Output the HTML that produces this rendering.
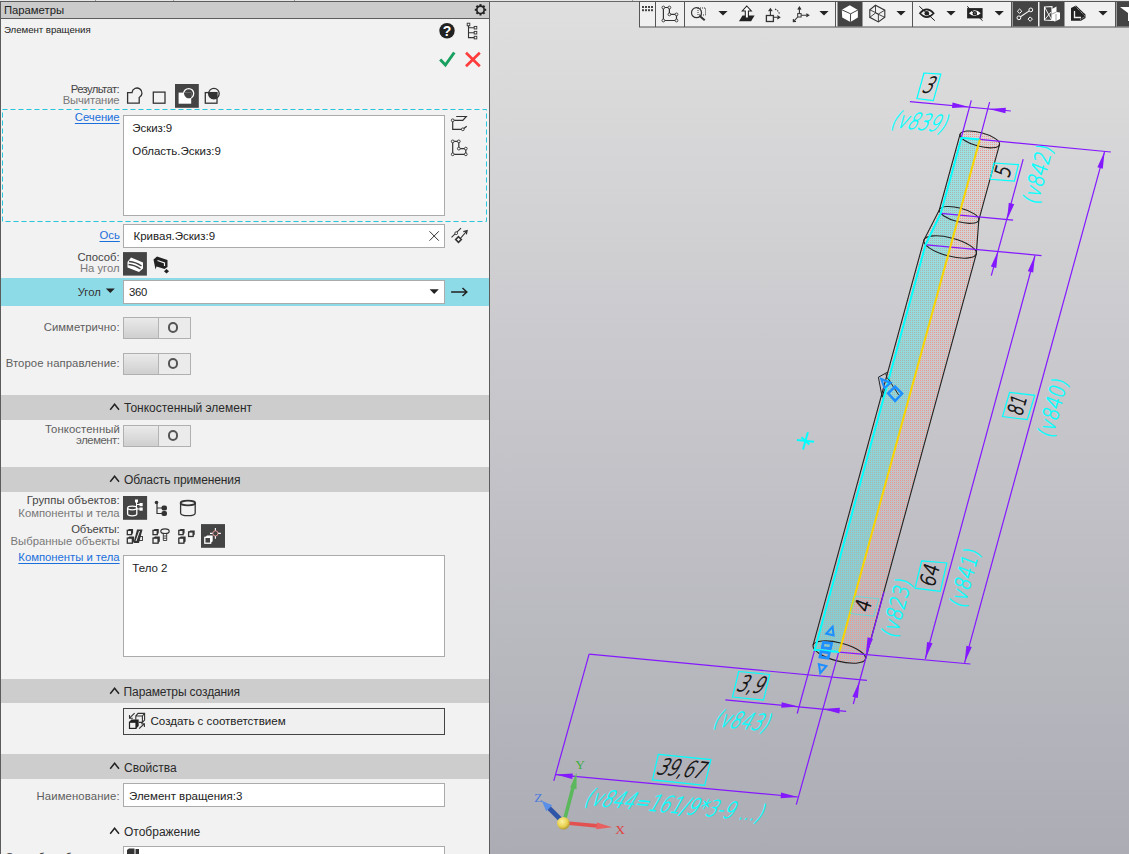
<!DOCTYPE html><html><head><meta charset="utf-8"><title>Параметры</title><style>
html,body{margin:0;padding:0}
body{width:1129px;height:854px;overflow:hidden;position:relative;background:#f2f2f2;font-family:"Liberation Sans",sans-serif}
.a{position:absolute}
.t{position:absolute;white-space:nowrap;line-height:1;}
.lnk{color:#1a6fdc !important;text-decoration:underline;text-underline-offset:2px}
.box{position:absolute;background:#fff;border:1px solid #ababab;box-sizing:border-box}
.sec{position:absolute;left:1px;width:488px;background:#cdcdcd}
.tog{position:absolute;left:123px;width:68px;height:22px;box-sizing:border-box;border:1px solid #b0b0b0;background:#ebebeb}
.tog i{position:absolute;left:0;top:0;width:33.5px;height:20px;background:linear-gradient(#eaeaea,#cfcfcf);border-right:1px solid #b4b4b4}
.tog b{position:absolute;left:43.7px;top:4px;width:6.6px;height:6.6px;border:2.1px solid #555;border-radius:50%}
svg{position:absolute;left:0;top:0}

</style></head><body>
<div class="a" style="left:0;top:0;width:1129px;height:2px;background:#e6e6e6"></div>
<div class="a" style="left:95px;top:0;width:1px;height:1px;background:#9a9a9a"></div>
<div class="a" style="left:173px;top:0;width:1px;height:1px;background:#9a9a9a"></div>
<div class="a" style="left:294px;top:0;width:1px;height:1px;background:#9a9a9a"></div>
<div class="a" style="left:632px;top:0;width:1px;height:1px;background:#9a9a9a"></div>
<div class="a" style="left:0;top:1px;width:490px;height:18px;background:#cbcbcb;border:1px solid #5c5c5c;box-sizing:border-box"></div>
<div class="a" style="left:0;top:18px;width:490px;height:58px;background:#f2f2f2;border:1px solid #5c5c5c;box-sizing:border-box"></div>
<div class="a" style="left:0;top:75px;width:490px;height:779px;background:#f2f2f2;border-left:1px solid #5c5c5c;border-right:1px solid #5c5c5c;box-sizing:border-box"></div>
<div class="a" style="left:1px;top:278px;width:488px;height:27.5px;background:#8edbe8"></div>
<div class="sec" style="top:395px;height:24.69999999999999px"></div>
<div class="sec" style="top:467.3px;height:24.5px"></div>
<div class="sec" style="top:678.8px;height:24.40000000000009px"></div>
<div class="sec" style="top:754px;height:24.5px"></div>
<svg width="1129" height="854" viewBox="0 0 1129 854"><rect x="2.5" y="109.5" width="484" height="112" fill="none" stroke="#27c3dc" stroke-width="1" stroke-dasharray="5 3"/></svg>
<div class="box" style="left:123px;top:115px;width:322px;height:101px"></div>
<div class="box" style="left:123px;top:224px;width:322px;height:24px"></div>
<div class="box" style="left:123px;top:280px;width:322px;height:23.5px"></div>
<div class="box" style="left:123px;top:555px;width:322px;height:102px"></div>
<div class="box" style="left:123px;top:708px;width:322px;height:27px;background:#f0f0f0;border-color:#444"></div>
<div class="box" style="left:123px;top:783px;width:322px;height:23.5px"></div>
<div class="box" style="left:123px;top:846px;width:322px;height:20px"></div>
<div class="tog" style="top:317px"><i></i><b></b></div>
<div class="tog" style="top:353px"><i></i><b></b></div>
<div class="tog" style="top:425px"><i></i><b></b></div>
<svg width="1129" height="854" viewBox="0 0 1129 854">
<defs>
<linearGradient id="bg" x1="0" y1="0" x2="0" y2="1"><stop offset="0" stop-color="#dfdfdf"/><stop offset="0.5" stop-color="#c5c5ca"/><stop offset="1" stop-color="#acacb5"/></linearGradient>
<pattern id="stP" width="2" height="2" patternUnits="userSpaceOnUse"><rect width="1" height="1" fill="#ea9a90"/></pattern>
</defs>
<rect x="490" y="0" width="639" height="854" fill="url(#bg)"/>
<path d="M981.6,132.7 A20.4,6.9 14.7 0 0 960.1,134.2 L939.4,209.7 L923.9,240.1 L813.1,645.2 L814.7,649.8 L839.3,652.1 Z" fill="url(#stP)"/>
<path d="M981.6,132.7 A20.4,6.9 14.7 0 1 999.5,144.6 L978.8,220.1 L976.3,253.9 L865.5,659.0 A27.1,9.1 14.7 0 1 836.9,660.9 L839.3,652.1 Z" fill="url(#stP)"/>
<polygon points="839.3,652.1 814.7,649.8 925.5,244.7 940.8,213.2 961.5,137.7 979.8,139.4" fill="rgba(0,255,255,0.27)"/>
<path d="M960.1,134.2 L939.4,209.7 L923.9,240.1 L813.1,645.2" fill="none" stroke="#222" stroke-width="1.1"/>
<path d="M999.5,144.6 L978.8,220.1 L976.3,253.9 L865.5,659.0" fill="none" stroke="#222" stroke-width="1.1"/>
<ellipse cx="979.8" cy="139.4" rx="20.4" ry="6.9" transform="rotate(14.7 979.8 139.4)" fill="none" stroke="#222" stroke-width="1.1"/>
<ellipse cx="959.1" cy="214.9" rx="20.4" ry="6.9" transform="rotate(14.7 959.1 214.9)" fill="none" stroke="#222" stroke-width="1.1"/>
<ellipse cx="950.1" cy="247.0" rx="27.1" ry="9.1" transform="rotate(14.7 950.1 247.0)" fill="none" stroke="#222" stroke-width="1.1"/>
<ellipse cx="839.3" cy="652.1" rx="27.1" ry="9.1" transform="rotate(14.7 839.3 652.1)" fill="none" stroke="#222" stroke-width="1.1"/>
<line x1="909.9" y1="101.6" x2="1010.8" y2="111.0" stroke="#8418ff" stroke-width="1.2" />
<polygon points="969.2,106.9 952.0,108.1 952.5,102.5" fill="#8418ff"/>
<polygon points="988.7,108.9 1005.9,107.7 1005.4,113.3" fill="#8418ff"/>
<line x1="971.3" y1="100.4" x2="961.4" y2="137.0" stroke="#8418ff" stroke-width="1.2" />
<line x1="989.6" y1="102.2" x2="979.6" y2="139.7" stroke="#8418ff" stroke-width="1.2" />
<line x1="979.8" y1="139.4" x2="1110.9" y2="152.0" stroke="#8418ff" stroke-width="1.2" />
<line x1="1023.2" y1="159.2" x2="991.3" y2="275.7" stroke="#8418ff" stroke-width="1.2" />
<polygon points="1007.0,219.9 1008.8,202.8 1014.2,204.2" fill="#8418ff"/>
<polygon points="998.1,250.9 996.3,268.0 990.9,266.6" fill="#8418ff"/>
<line x1="940.9" y1="213.4" x2="1013.1" y2="220.2" stroke="#8418ff" stroke-width="1.2" />
<line x1="926.5" y1="244.9" x2="1041.5" y2="255.6" stroke="#8418ff" stroke-width="1.2" />
<line x1="1035.0" y1="255.5" x2="925.3" y2="659.0" stroke="#8418ff" stroke-width="1.2" />
<polygon points="1035.0,255.5 1033.2,272.6 1027.8,271.2" fill="#8418ff"/>
<polygon points="925.3,659.0 927.1,641.9 932.5,643.3" fill="#8418ff"/>
<line x1="1104.6" y1="151.6" x2="964.6" y2="662.8" stroke="#8418ff" stroke-width="1.2" />
<polygon points="1104.6,151.6 1102.8,168.7 1097.4,167.3" fill="#8418ff"/>
<polygon points="964.6,662.8 966.4,645.7 971.8,647.1" fill="#8418ff"/>
<line x1="839.3" y1="652.1" x2="970.4" y2="664.0" stroke="#8418ff" stroke-width="1.2" />
<line x1="884.0" y1="592.0" x2="853.3" y2="704.0" stroke="#8418ff" stroke-width="1.2" />
<polygon points="865.8,654.4 867.6,637.3 873.0,638.7" fill="#8418ff"/>
<polygon points="859.6,681.0 857.8,698.1 852.4,696.7" fill="#8418ff"/>
<line x1="589.1" y1="654.2" x2="866.9" y2="680.4" stroke="#8418ff" stroke-width="1.2" />
<line x1="589.1" y1="654.2" x2="553.8" y2="780.8" stroke="#8418ff" stroke-width="1.2" />
<line x1="555.6" y1="774.6" x2="797.8" y2="797.0" stroke="#8418ff" stroke-width="1.2" />
<polygon points="555.6,774.6 572.8,773.4 572.3,779.0" fill="#8418ff"/>
<polygon points="797.8,797.0 780.6,798.2 781.1,792.6" fill="#8418ff"/>
<line x1="838.7" y1="652.1" x2="796.3" y2="804.7" stroke="#8418ff" stroke-width="1.2" />
<line x1="814.7" y1="649.8" x2="797.2" y2="713.5" stroke="#8418ff" stroke-width="1.2" />
<line x1="725.4" y1="699.9" x2="846.2" y2="711.4" stroke="#8418ff" stroke-width="1.2" />
<polygon points="798.4,706.6 781.2,707.8 781.7,702.2" fill="#8418ff"/>
<polygon points="822.7,709.0 839.9,707.8 839.4,713.4" fill="#8418ff"/>
<polyline points="839.3,652.1 814.7,649.8 925.5,244.7 940.8,213.2 961.5,137.7 979.8,139.4" fill="none" stroke="#00ffff" stroke-width="2"/>
<line x1="839.3" y1="652.1" x2="979.8" y2="139.4" stroke="#f7d400" stroke-width="2.0" />
<polygon points="924.0,73.0 940.8,74.1 933.3,100.6 916.9,98.5" fill="none" stroke="#00ffff" stroke-width="1.2"/>
<polygon points="993.9,163.0 1018.5,164.6 1014.4,181.0 990.2,179.3" fill="none" stroke="#00ffff" stroke-width="1.2"/>
<polygon points="1009.6,392.3 1034.8,395.3 1027.3,419.7 1002.5,416.5" fill="none" stroke="#00ffff" stroke-width="1.2"/>
<polygon points="921.7,560.9 946.9,563.0 940.3,591.4 915.0,588.2" fill="none" stroke="#00ffff" stroke-width="1.2"/>
<polygon points="855.3,596.3 878.8,598.8 873.9,616.2 850.5,613.5" fill="none" stroke="#00ffff" stroke-width="1.0" stroke-opacity="0.45"/>
<polygon points="738.7,671.5 769.7,674.5 763.5,700.2 732.5,697.0" fill="none" stroke="#00ffff" stroke-width="1.2"/>
<polygon points="658.3,754.3 710.9,759.6 704.7,785.3 652.5,779.9" fill="none" stroke="#00ffff" stroke-width="1.2"/>
<text transform="matrix(0.9957,0.0926,-0.5307,0.9397,928.8,86.5)" x="0.5" y="6.6" text-anchor="middle" textLength="9.8" lengthAdjust="spacingAndGlyphs" font-family="'DejaVu Sans', sans-serif" font-weight="200" font-size="23.05" fill="#111" stroke="#111" stroke-width="0.7">3</text>
<text transform="matrix(0.9957,0.0926,-0.5307,0.9397,751.1,685.8)" x="0.5" y="6.6" text-anchor="middle" textLength="26.0" lengthAdjust="spacingAndGlyphs" font-family="'DejaVu Sans', sans-serif" font-weight="200" font-size="23.05" fill="#111" stroke="#111" stroke-width="0.7">3,9</text>
<text transform="matrix(0.9957,0.0926,-0.5307,0.9397,681.6,769.8)" x="0.5" y="6.6" text-anchor="middle" textLength="47.0" lengthAdjust="spacingAndGlyphs" font-family="'DejaVu Sans', sans-serif" font-weight="200" font-size="23.05" fill="#111" stroke="#111" stroke-width="0.7">39,67</text>
<text transform="matrix(0.2639,-0.9645,0.9250,0.3511,1004.2,172.0)" x="0.5" y="6.0" text-anchor="middle" textLength="11.2" lengthAdjust="spacingAndGlyphs" font-family="'DejaVu Sans', sans-serif" font-weight="200" font-size="21.40" fill="#111" stroke="#111" stroke-width="0.7">5</text>
<text transform="matrix(0.2639,-0.9645,0.9250,0.3511,1018.5,405.9)" x="0.5" y="6.0" text-anchor="middle" textLength="19.5" lengthAdjust="spacingAndGlyphs" font-family="'DejaVu Sans', sans-serif" font-weight="200" font-size="21.40" fill="#111" stroke="#111" stroke-width="0.7">81</text>
<text transform="matrix(0.2639,-0.9645,0.9250,0.3511,931.0,575.9)" x="0.5" y="6.0" text-anchor="middle" textLength="22.4" lengthAdjust="spacingAndGlyphs" font-family="'DejaVu Sans', sans-serif" font-weight="200" font-size="21.40" fill="#111" stroke="#111" stroke-width="0.7">64</text>
<text transform="matrix(0.2639,-0.9645,0.9250,0.3511,864.6,606.2)" x="0.5" y="6.0" text-anchor="middle" textLength="11.6" lengthAdjust="spacingAndGlyphs" font-family="'DejaVu Sans', sans-serif" font-weight="200" font-size="21.40" fill="#111" stroke="#111" stroke-width="0.7">4</text>
<text transform="matrix(0.9957,0.0926,-0.5307,0.9397,920.5,122.0)" x="0.0" y="7.9" text-anchor="middle" textLength="54.5" lengthAdjust="spacingAndGlyphs" font-family="'DejaVu Sans', sans-serif" font-weight="200" font-size="23.59" fill="#00ffff" stroke="#00ffff" stroke-width="0.5">(v839)</text>
<text transform="matrix(0.9957,0.0926,-0.5307,0.9397,743.2,721.0)" x="0.0" y="7.9" text-anchor="middle" textLength="54.5" lengthAdjust="spacingAndGlyphs" font-family="'DejaVu Sans', sans-serif" font-weight="200" font-size="23.59" fill="#00ffff" stroke="#00ffff" stroke-width="0.5">(v843)</text>
<text transform="matrix(0.9957,0.0926,-0.5307,0.9397,675.8,805.4)" x="0.0" y="7.9" text-anchor="middle" textLength="178.0" lengthAdjust="spacingAndGlyphs" font-family="'DejaVu Sans', sans-serif" font-weight="200" font-size="23.59" fill="#00ffff" stroke="#00ffff" stroke-width="0.5">(v844=161/9*3-9 ...)</text>
<text transform="matrix(0.2639,-0.9645,0.9250,0.3511,1038.2,174.2)" x="0.0" y="7.4" text-anchor="middle" textLength="60.0" lengthAdjust="spacingAndGlyphs" font-family="'DejaVu Sans', sans-serif" font-weight="200" font-size="22.22" fill="#00ffff" stroke="#00ffff" stroke-width="0.5">(v842)</text>
<text transform="matrix(0.2639,-0.9645,0.9250,0.3511,1053.0,407.8)" x="0.0" y="7.4" text-anchor="middle" textLength="60.0" lengthAdjust="spacingAndGlyphs" font-family="'DejaVu Sans', sans-serif" font-weight="200" font-size="22.22" fill="#00ffff" stroke="#00ffff" stroke-width="0.5">(v840)</text>
<text transform="matrix(0.2639,-0.9645,0.9250,0.3511,896.9,607.8)" x="0.0" y="7.4" text-anchor="middle" textLength="60.0" lengthAdjust="spacingAndGlyphs" font-family="'DejaVu Sans', sans-serif" font-weight="200" font-size="22.22" fill="#00ffff" stroke="#00ffff" stroke-width="0.5">(v823)</text>
<text transform="matrix(0.2639,-0.9645,0.9250,0.3511,965.0,577.6)" x="0.0" y="7.4" text-anchor="middle" textLength="60.0" lengthAdjust="spacingAndGlyphs" font-family="'DejaVu Sans', sans-serif" font-weight="200" font-size="22.22" fill="#00ffff" stroke="#00ffff" stroke-width="0.5">(v841)</text>
<g stroke="#00ffff" stroke-width="2" stroke-linecap="butt"><line x1="796.9" y1="440.1" x2="814" y2="441.8"/><line x1="807.9" y1="432.2" x2="803" y2="449.5"/><line x1="801.4" y1="437.3" x2="809.4" y2="444.4"/></g>
<path d="M887.7,372.1 L878.4,377.2 L882.2,397.2 L884.6,388.5 M885.8,373.5 L887.3,379 M888.3,378.8 L898.6,394.9" fill="none" stroke="#222" stroke-width="1"/>
<path d="M881.3,379 L890.6,382.9 L884.4,388 Z" fill="none" stroke="#1e8fff" stroke-width="2.2" stroke-linejoin="miter"/>
<path d="M895.1,386.6 L902.1,393.6 L895.1,400.9 L888.1,393.4 Z" fill="none" stroke="#1e8fff" stroke-width="2.5"/>
<path d="M832.6,626.8 L826.3,633.6 L833.6,635.3 Z" fill="none" stroke="#1e8fff" stroke-width="2.1"/>
<polygon points="823.4,642.4 831.6,643.5 830.4,648.7 822.2,647.6" fill="none" stroke="#1e8fff" stroke-width="2.7"/>
<polygon points="820.9,651.7 829.3,652.8 828.2,658.2 819.9,657.1" fill="none" stroke="#1e8fff" stroke-width="2.7"/>
<path d="M818.9,664.2 L826.3,666.1 L820.3,673 Z" fill="none" stroke="#1e8fff" stroke-width="2.1"/>
<g>
<line x1="562.5" y1="821.5" x2="547" y2="806" stroke="#2f55a8" stroke-width="4.6"/>
<polygon points="541.8,800.8 552.2,805.2 546.3,811.2" fill="#5a8fe8"/>
<line x1="565" y1="818" x2="573" y2="787.5" stroke="#5cb85c" stroke-width="3.6"/>
<polygon points="576.5,772.8 576.6,789.3 570.2,787.6" fill="#5cb85c"/>
<line x1="569" y1="823.3" x2="597.5" y2="825.9" stroke="#e25050" stroke-width="3.6"/>
<polygon points="612.3,827.3 596.2,829.3 596.9,822.6" fill="#e86060"/>
<radialGradient id="sph" cx="0.4" cy="0.35" r="0.7"><stop offset="0" stop-color="#fbf3a0"/><stop offset="0.6" stop-color="#e8d050"/><stop offset="1" stop-color="#a89030"/></radialGradient>
<circle cx="563.4" cy="823.3" r="6.3" fill="url(#sph)"/>
<text x="575.3" y="769.3" font-family="'Liberation Serif', serif" font-size="13.5" fill="#3fae3f">Y</text>
<text x="615.3" y="833.6" font-family="'Liberation Serif', serif" font-size="13.5" fill="#e04040">X</text>
<text x="534.3" y="802.3" font-family="'Liberation Serif', serif" font-size="13.5" fill="#4a7ae0">Z</text>
</g>
<rect x="490" y="0" width="639" height="1" fill="#e6e6e6"/><rect x="490" y="1" width="639" height="1" fill="#686868"/><rect x="632" y="0" width="1" height="1" fill="#9a9a9a"/>
<rect x="639.5" y="1.5" width="490" height="25.5" fill="#f0f0f0" stroke="#555" stroke-width="1"/>
<line x1="655.5" y1="2" x2="655.5" y2="27" stroke="#555" stroke-width="1"/>
<line x1="684.5" y1="2" x2="684.5" y2="27" stroke="#555" stroke-width="1"/>
<line x1="835.5" y1="2" x2="835.5" y2="27" stroke="#555" stroke-width="1"/>
<line x1="912.5" y1="2" x2="912.5" y2="27" stroke="#555" stroke-width="1"/>
<line x1="1011.5" y1="2" x2="1011.5" y2="27" stroke="#555" stroke-width="1"/>
<line x1="1115.5" y1="2" x2="1115.5" y2="27" stroke="#555" stroke-width="1"/>
<rect x="837.5" y="2" width="25" height="24.5" fill="#444"/>
<rect x="1012.5" y="2" width="25.5" height="24.5" fill="#444"/>
<rect x="1039.5" y="2" width="25" height="24.5" fill="#444"/>
<rect x="1116.5" y="2" width="13" height="24.5" fill="#444"/>
<rect x="642" y="6.0" width="2" height="2" fill="#444"/>
<rect x="645" y="6.0" width="2" height="2" fill="#444"/>
<rect x="648" y="6.0" width="2" height="2" fill="#444"/>
<rect x="651" y="6.0" width="2" height="2" fill="#444"/>
<rect x="642" y="9.2" width="2" height="2" fill="#444"/>
<rect x="645" y="9.2" width="2" height="2" fill="#444"/>
<rect x="648" y="9.2" width="2" height="2" fill="#444"/>
<rect x="651" y="9.2" width="2" height="2" fill="#444"/>
<polygon points="663.4,7.5 669.4,7.5 669.4,14.4 676.5,14.4 676.5,20.5 663.4,20.5" fill="none" stroke="#333" stroke-width="1.2"/><circle cx="663.4" cy="7.5" r="1.4" fill="#f0f0f0" stroke="#333" stroke-width="0.9"/><circle cx="669.4" cy="7.5" r="1.4" fill="#f0f0f0" stroke="#333" stroke-width="0.9"/><circle cx="669.4" cy="14.4" r="1.4" fill="#f0f0f0" stroke="#333" stroke-width="0.9"/><circle cx="676.5" cy="14.4" r="1.4" fill="#f0f0f0" stroke="#333" stroke-width="0.9"/><circle cx="676.5" cy="20.5" r="1.4" fill="#f0f0f0" stroke="#333" stroke-width="0.9"/><circle cx="663.4" cy="20.5" r="1.4" fill="#f0f0f0" stroke="#333" stroke-width="0.9"/>
<circle cx="696.5" cy="12.7" r="5" fill="none" stroke="#333" stroke-width="1.2"/>
<line x1="700" y1="16.3" x2="704.7" y2="20.3" stroke="#333" stroke-width="2"/>
<rect x="698" y="8" width="7.5" height="7" fill="none" stroke="#333" stroke-width="1" stroke-dasharray="1 1"/>
<polygon points="718.4,11.0 727.6,11.0 723,15.6" fill="#222"/>
<polygon points="739,21.3 742.5,15.5 754.6,15.5 751.1,21.3" fill="#222"/>
<polygon points="746.8,6 751.3,11 748.4,11 748.4,18 745.3,18 745.3,11 742.3,11" fill="#fff" stroke="#222" stroke-width="1.1"/>
<rect x="766.4" y="15.5" width="7" height="6" fill="#f0f0f0" stroke="#333" stroke-width="1.3"/>
<path d="M770.4,15.5 V9.5 M768.6,11.3 L770.4,8.8 L772.2,11.3 M773.4,17.3 H779 M777.3,15.6 L779.8,17.3 L777.3,19" fill="none" stroke="#333" stroke-width="1.1"/>
<path d="M775,9 Q779,11 779.5,14.5" fill="none" stroke="#333" stroke-width="1.1" stroke-dasharray="1.5 1"/>
<rect x="797.7" y="13.6" width="3.4" height="3.4" fill="#f0f0f0" stroke="#333" stroke-width="1"/>
<path d="M799.4,13.6 V8 M797.8,9.6 L799.4,7 L801,9.6 M801.1,15.3 H808 M806.3,13.7 L808.8,15.3 L806.3,16.9 M797.7,17 L793.6,21.4 M793.4,18.9 L793.3,21.7 L796,21.4" fill="none" stroke="#333" stroke-width="1.1"/>
<polygon points="819.4,11.0 828.6,11.0 824,15.6" fill="#222"/>
<polygon points="849.8,5.2 857.9,10 857.9,17.4 850.4,21.9 842.2,17.4 841.8,9.8" fill="#fff"/>
<path d="M841.8,9.8 L850.6,13.8 L857.9,10 M850.6,13.8 L850.4,21.9" fill="none" stroke="#444" stroke-width="1"/>
<polygon points="875.5,5.2 884.8,10.2 884.8,17.3 878.4,21.9 869.8,17.3 869.8,9.8" fill="none" stroke="#333" stroke-width="1.1"/>
<path d="M869.8,9.8 L878.4,14 L884.8,10.2 M878.4,14 V21.9 M875.5,5.2 V13 L869.8,17.3 M875.5,13 L884.8,17.3" fill="none" stroke="#333" stroke-width="0.9"/>
<polygon points="896.4,11.0 905.6,11.0 901,15.6" fill="#222"/>
<path d="M919.9,13.2 Q926.8,5.5 933.7,13.2 Q926.8,21 919.9,13.2 Z" fill="none" stroke="#222" stroke-width="1.6"/>
<circle cx="926.8" cy="13.2" r="2.3" fill="#222"/>
<line x1="919.3" y1="6.3" x2="934.8" y2="20.7" stroke="#222" stroke-width="1"/>
<polygon points="946.4,11.0 955.6,11.0 951,15.6" fill="#222"/>
<rect x="967.1" y="8.1" width="15.5" height="10.3" fill="#222"/>
<path d="M969,13.2 Q974.8,7.5 980.7,13.2 Q974.8,19 969,13.2 Z" fill="#fff"/>
<circle cx="974.8" cy="13.2" r="2.2" fill="#222"/><circle cx="974.8" cy="13.2" r="0.8" fill="#fff"/>
<line x1="967.1" y1="6.3" x2="982.6" y2="20.7" stroke="#222" stroke-width="1"/>
<polygon points="994.6,11.0 1003.8000000000001,11.0 999.2,15.6" fill="#222"/>
<line x1="1018.9" y1="17.8" x2="1030.8" y2="9.9" stroke="#fff" stroke-width="1.1"/>
<circle cx="1018.9" cy="17.8" r="1.9" fill="#444" stroke="#fff" stroke-width="1"/><circle cx="1030.8" cy="9.9" r="1.9" fill="#444" stroke="#fff" stroke-width="1"/>
<polygon points="1019.6,9 1021.8,11.2 1019.6,13.4 1017.4,11.2" fill="#444" stroke="#fff" stroke-width="1"/>
<polygon points="1030.2,16.9 1032.4,19.1 1030.2,21.3 1028,19.1" fill="#444" stroke="#fff" stroke-width="1"/>
<polygon points="1044.5,7 1052,6.5 1052,20.5 1044.5,20" fill="none" stroke="#fff" stroke-width="1.1"/>
<path d="M1044.5,7 L1052,20.5 M1044.5,20 L1051,12" stroke="#fff" stroke-width="0.9" fill="none"/>
<polygon points="1052,9 1056.5,6.5 1056.5,12 1060,12.5 1060,19 1055,21.5 1052,20.5" fill="#fff"/>
<path d="M1052,14 L1056.5,12 M1056,14 V21" stroke="#888" stroke-width="0.8" fill="none"/>
<path d="M1071,8 L1076,5.5 L1085.5,14.5 V18 L1081,20.8 H1071 Z" fill="#222"/>
<path d="M1074.5,11 V17.5 H1081" fill="none" stroke="#f0f0f0" stroke-width="1.3"/>
<path d="M1075.5,6.5 L1084.5,15.5 M1078,6.5 L1085,13.5 M1080,19.5 L1084.5,17" fill="none" stroke="#f0f0f0" stroke-width="0.8" stroke-dasharray="1 1"/>
<polygon points="1098.4,11.0 1107.6,11.0 1103,15.6" fill="#222"/>
<path d="M1120,7 H1131 V21 H1128 V13 Z" fill="#fff"/>
<line x1="484.10" y1="9.80" x2="486.20" y2="9.80" stroke="#222" stroke-width="2"/><line x1="483.05" y1="12.35" x2="484.53" y2="13.83" stroke="#222" stroke-width="2"/><line x1="480.50" y1="13.40" x2="480.50" y2="15.50" stroke="#222" stroke-width="2"/><line x1="477.95" y1="12.35" x2="476.47" y2="13.83" stroke="#222" stroke-width="2"/><line x1="476.90" y1="9.80" x2="474.80" y2="9.80" stroke="#222" stroke-width="2"/><line x1="477.95" y1="7.25" x2="476.47" y2="5.77" stroke="#222" stroke-width="2"/><line x1="480.50" y1="6.20" x2="480.50" y2="4.10" stroke="#222" stroke-width="2"/><line x1="483.05" y1="7.25" x2="484.53" y2="5.77" stroke="#222" stroke-width="2"/><circle cx="480.5" cy="9.8" r="3.7" fill="none" stroke="#222" stroke-width="1.7"/>
<circle cx="447" cy="30.7" r="7.7" fill="#222"/>
<text x="447" y="35.7" text-anchor="middle" font-family="'Liberation Sans', sans-serif" font-weight="bold" font-size="14" fill="#fff">?</text>
<path d="M468.5,25 V37.6 H474.5 M468.5,27.7 H474.5 M468.5,32.7 H474.5" fill="none" stroke="#333" stroke-width="1.1"/>
<rect x="467.2" y="23.2" width="2.6" height="2.6" fill="#f2f2f2" stroke="#333" stroke-width="0.9"/>
<rect x="474.2" y="26.4" width="2.6" height="2.6" fill="#f2f2f2" stroke="#333" stroke-width="0.9"/>
<rect x="474.2" y="31.400000000000002" width="2.6" height="2.6" fill="#f2f2f2" stroke="#333" stroke-width="0.9"/>
<rect x="474.2" y="36.300000000000004" width="2.6" height="2.6" fill="#f2f2f2" stroke="#333" stroke-width="0.9"/>
<path d="M440.2,59.5 L445.4,65 L454.3,52.5" fill="none" stroke="#18a060" stroke-width="3"/>
<path d="M466,52.8 L479.8,66.2 M479.8,52.8 L466,66.2" fill="none" stroke="#ff3c3c" stroke-width="2.7"/>
<path d="M127.6,103.2 V92.6 H132 A5,5 0 1 1 139.2,97.5 V103.2 Z" fill="none" stroke="#333" stroke-width="1.3"/>
<rect x="153.3" y="92.1" width="11.7" height="11.1" fill="none" stroke="#333" stroke-width="1.3"/>
<rect x="175" y="84" width="23.8" height="23.8" fill="#444"/>
<rect x="178.6" y="92.6" width="12.6" height="11.1" fill="#fff"/>
<circle cx="188.7" cy="93.6" r="5" fill="none" stroke="#fff" stroke-width="1.3"/>
<path d="M184,92.6 H191.2 V97.8 A5,5 0 0 1 184,93.6 Z" fill="#444"/>
<rect x="205.3" y="92.6" width="11.7" height="10.6" fill="none" stroke="#333" stroke-width="1.3"/>
<circle cx="213.9" cy="93.6" r="5.3" fill="none" stroke="#333" stroke-width="1.3"/>
<path d="M208.6,92.6 H217 V98 A5.3,5.3 0 0 1 208.6,93.6 Z" fill="#333"/>
<path d="M456.2,116.5 H466.3 L462.8,120.3 H452.7 V129.3 H462.8 L466.7,126.2" fill="none" stroke="#333" stroke-width="1.2"/>
<circle cx="452.7" cy="120.3" r="1.4" fill="#f2f2f2" stroke="#333" stroke-width="0.9"/><circle cx="462.8" cy="129.3" r="1.4" fill="#f2f2f2" stroke="#333" stroke-width="0.9"/>
<polygon points="452.7,141.4 458.8,141.4 458.8,148.6 465.8,148.6 465.8,154.3 452.7,154.3" fill="none" stroke="#333" stroke-width="1.2"/><circle cx="452.7" cy="141.4" r="1.4" fill="#f2f2f2" stroke="#333" stroke-width="0.9"/><circle cx="458.8" cy="141.4" r="1.4" fill="#f2f2f2" stroke="#333" stroke-width="0.9"/><circle cx="458.8" cy="148.6" r="1.4" fill="#f2f2f2" stroke="#333" stroke-width="0.9"/><circle cx="465.8" cy="148.6" r="1.4" fill="#f2f2f2" stroke="#333" stroke-width="0.9"/><circle cx="465.8" cy="154.3" r="1.4" fill="#f2f2f2" stroke="#333" stroke-width="0.9"/><circle cx="452.7" cy="154.3" r="1.4" fill="#f2f2f2" stroke="#333" stroke-width="0.9"/>
<path d="M429.5,231.3 L438.8,240.7 M438.8,231.3 L429.5,240.7" stroke="#333" stroke-width="1" fill="none"/>
<path d="M451.5,237.4 L461,228.2 M459,240 L466.5,231.3 M463.3,231.6 L467.2,230.5 L466.4,234.4" fill="none" stroke="#333" stroke-width="1.1"/>
<circle cx="456.2" cy="233.2" r="1.4" fill="#f2f2f2" stroke="#333" stroke-width="0.9"/>
<polygon points="458.5,236.7 461.3,239.5 458.5,242.3 455.7,239.5" fill="#f2f2f2" stroke="#333" stroke-width="1.6"/>
<rect x="123" y="252.1" width="23.9" height="23.5" fill="#444"/>
<path d="M127.5,262 L131,257.5 L143,262.5 V268.5 L139,272 L127.5,267.5 Z" fill="#fff"/>
<path d="M129,261.5 Q136,262 141.5,266 M128.5,264.5 Q135,265 140.5,269" fill="none" stroke="#444" stroke-width="1.4"/>
<path d="M153.5,259.5 L157,256.5 L167.5,260 V267 L164.5,269 L156.5,266.5 L155.5,269.5 Z" fill="#222"/>
<path d="M157.5,260.5 L164.5,263 V266" fill="none" stroke="#f2f2f2" stroke-width="1.2"/>
<polygon points="166.5,269 169,271.2 166.5,273.4 164,271.2" fill="#222"/>
<polygon points="105.8,288.4 114.8,288.4 110.3,292.9" fill="#222"/>
<polygon points="429.6,289.3 438.8,289.3 434.2,293.9" fill="#222"/>
<path d="M451.1,292 H466.5 M462.5,288 L466.8,292 L462.5,296" fill="none" stroke="#222" stroke-width="1.5"/>
<path d="M110.19999999999999,409.7 L114.6,404.3 L119.0,409.7" fill="none" stroke="#222" stroke-width="1.5"/>
<path d="M110.19999999999999,481.7 L114.6,476.3 L119.0,481.7" fill="none" stroke="#222" stroke-width="1.5"/>
<path d="M110.19999999999999,693.7 L114.6,688.3 L119.0,693.7" fill="none" stroke="#222" stroke-width="1.5"/>
<path d="M110.19999999999999,768.7 L114.6,763.3 L119.0,768.7" fill="none" stroke="#222" stroke-width="1.5"/>
<path d="M110.19999999999999,833.7 L114.6,828.3 L119.0,833.7" fill="none" stroke="#222" stroke-width="1.5"/>
<rect x="123" y="496" width="24.1" height="23.8" fill="#444"/>
<path d="M127.6,508 V514 A4.6,1.8 0 0 0 136.8,514 V508" fill="none" stroke="#fff" stroke-width="1.3"/><ellipse cx="132.2" cy="508" rx="4.6" ry="1.8" fill="none" stroke="#fff" stroke-width="1.3"/>
<path d="M136.5,501 V509 H140 M136.5,504.5 H140" fill="none" stroke="#fff" stroke-width="1"/><rect x="135" y="499.5" width="3" height="3" fill="#fff"/><rect x="139.5" y="503" width="3.2" height="3.2" fill="#fff"/><rect x="139.5" y="507.5" width="3.2" height="3.2" fill="#fff"/>
<path d="M157,503 V513.5 H162 M157,508 H162" fill="none" stroke="#333" stroke-width="1.2"/><circle cx="156.5" cy="502.5" r="1.8" fill="#333"/><rect x="161.5" y="505.5" width="5.5" height="5" rx="2" fill="#333"/><rect x="161.5" y="511" width="5.5" height="5" rx="2" fill="#333"/>
<path d="M180.6,503 V513 A7.3,2.7 0 0 0 195.2,513 V503" fill="none" stroke="#333" stroke-width="1.3"/><ellipse cx="187.9" cy="503" rx="7.3" ry="2.4" fill="none" stroke="#333" stroke-width="1.8"/>
<path d="M127.3,530.375 L128.95,529 H133.075 V533.125 L131.425,534.5" fill="#333"/><rect x="127.3" y="530.375" width="4.29" height="4.29" fill="#f2f2f2" stroke="#333" stroke-width="1.3"/>
<path d="M127.3,538.125 L129.25,536.5 H134.125 V541.375 L132.175,543.0" fill="#333"/><rect x="127.3" y="538.125" width="5.07" height="5.07" fill="#f2f2f2" stroke="#333" stroke-width="1.3"/>
<path d="M137,529.5 H142.5 L139,543 H133.5 Z" fill="#333"/><path d="M139.5,531 L136,541" stroke="#f2f2f2" stroke-width="1"/><rect x="139.5" y="536.5" width="3" height="4" fill="none" stroke="#333" stroke-width="0.9"/>
<path d="M153,530.375 L154.65,529 H158.775 V533.125 L157.125,534.5" fill="#333"/><rect x="153" y="530.375" width="4.29" height="4.29" fill="#f2f2f2" stroke="#333" stroke-width="1.3"/>
<path d="M153,538.125 L154.95,536.5 H159.825 V541.375 L157.875,543.0" fill="#333"/><rect x="153" y="538.125" width="5.07" height="5.07" fill="#f2f2f2" stroke="#333" stroke-width="1.3"/>
<ellipse cx="165" cy="531.2" rx="4.2" ry="2.3" fill="#f2f2f2" stroke="#333" stroke-width="1.2"/><path d="M163.3,533.5 V540.5 H166.7 V533.5 M163.3,536 H166.7 M163.3,538.2 H166.7" fill="none" stroke="#333" stroke-width="0.9"/>
<path d="M178.8,530.375 L180.45000000000002,529 H184.57500000000002 V533.125 L182.925,534.5" fill="#333"/><rect x="178.8" y="530.375" width="4.29" height="4.29" fill="#f2f2f2" stroke="#333" stroke-width="1.3"/>
<path d="M178.8,538.125 L180.75,536.5 H185.625 V541.375 L183.675,543.0" fill="#333"/><rect x="178.8" y="538.125" width="5.07" height="5.07" fill="#f2f2f2" stroke="#333" stroke-width="1.3"/>
<path d="M188.6,531.95 L190.34,530.5 H194.69 V534.85 L192.95,536.3" fill="#333"/><rect x="188.6" y="531.95" width="4.524" height="4.524" fill="#f2f2f2" stroke="#333" stroke-width="1.3"/>
<rect x="201" y="524.1" width="24" height="23.7" fill="#444"/>
<path d="M204.8,537.375 L207.05,535.5 H212.675 V541.125 L210.425,543.0" fill="#fff"/><rect x="204.8" y="537.375" width="5.8500000000000005" height="5.8500000000000005" fill="#444" stroke="#fff" stroke-width="1.3"/>
<path d="M215.4,528 V538.8 M210,533.4 H220.8" stroke="#fff" stroke-width="1.1"/><circle cx="215.4" cy="533.4" r="2.6" fill="#444" stroke="#f0a0a0" stroke-width="0.9"/>
<path d="M135.8,719.8 V716 L138,713.4 H144.6 V720 L142.4,722.4 H139 M135.8,716 H142.4 V722.4 M142.4,716 L144.6,713.4" fill="none" stroke="#333" stroke-width="1.1"/>
<path d="M129.3,722 L131.3,719.4 H138.7 V726 L136.2,728.6 Z" fill="#222"/>
<rect x="129.5" y="722.2" width="6.5" height="6.2" fill="#f0f0f0" stroke="#222" stroke-width="1.2"/>
<path d="M134.6,713.2 L129.8,717.9 M129.5,715 V718.3 H132.8 M139.1,728.7 L144,724 M141.1,723.7 H144.4 V727" fill="none" stroke="#333" stroke-width="1.1"/>
<path d="M127,854 V850 L129,848.5 H134.5 V854 Z" fill="#333"/><rect x="135.5" y="849" width="3.5" height="6" fill="#333"/>
</svg>
<span class="t " style="top:5px;font-size:11.3px;color:#222;letter-spacing:-0.024px;left:4.0px;">Параметры</span>
<span class="t " style="top:25px;font-size:9.7px;color:#222;letter-spacing:-0.049px;left:4.0px;">Элемент вращения</span>
<span class="t " style="top:84px;font-size:11.3px;color:#454545;letter-spacing:-0.632px;right:1010.03px;">Результат:</span>
<span class="t " style="top:95px;font-size:11.3px;color:#787878;letter-spacing:-0.135px;right:1009.54px;">Вычитание</span>
<span class="t lnk" style="top:112px;font-size:11.3px;color:#5e5e5e;letter-spacing:-0.054px;right:1009.45px;">Сечение</span>
<span class="t " style="top:123px;font-size:11.5px;color:#222;letter-spacing:-0.063px;left:132.3px;">Эскиз:9</span>
<span class="t " style="top:146px;font-size:11.5px;color:#222;letter-spacing:-0.011px;left:132.3px;">Область.Эскиз:9</span>
<span class="t lnk" style="top:230px;font-size:11.3px;color:#5e5e5e;right:1009.20px;">Ось</span>
<span class="t " style="top:231px;font-size:11.5px;color:#222;left:133.5px;">Кривая.Эскиз:9</span>
<span class="t " style="top:252px;font-size:11.3px;color:#454545;right:1009.40px;">Способ:</span>
<span class="t " style="top:263px;font-size:11.3px;color:#787878;right:1009.40px;">На угол</span>
<span class="t " style="top:287px;font-size:11.3px;color:#333;right:1028.20px;">Угол</span>
<span class="t " style="top:287px;font-size:11.3px;color:#222;letter-spacing:-0.320px;left:129.0px;">360</span>
<span class="t " style="top:322px;font-size:11.3px;color:#5e5e5e;letter-spacing:0.064px;right:1009.34px;">Симметрично:</span>
<span class="t " style="top:358px;font-size:11.3px;color:#5e5e5e;letter-spacing:0.090px;right:1009.31px;">Второе направление:</span>
<span class="t " style="top:402px;font-size:12px;color:#2a2a2a;letter-spacing:-0.015px;left:124.0px;">Тонкостенный элемент</span>
<span class="t " style="top:424px;font-size:11.3px;color:#5e5e5e;letter-spacing:0.093px;right:1009.11px;">Тонкостенный</span>
<span class="t " style="top:435px;font-size:11.3px;color:#5e5e5e;letter-spacing:-0.438px;right:1009.44px;">элемент:</span>
<span class="t " style="top:474px;font-size:12px;color:#2a2a2a;letter-spacing:-0.114px;left:124.0px;">Область применения</span>
<span class="t " style="top:495px;font-size:11.3px;color:#454545;letter-spacing:0.060px;right:1009.34px;">Группы объектов:</span>
<span class="t " style="top:508px;font-size:11.3px;color:#787878;letter-spacing:-0.013px;right:1009.41px;">Компоненты и тела</span>
<span class="t " style="top:524px;font-size:11.3px;color:#454545;letter-spacing:-0.192px;right:1009.59px;">Объекты:</span>
<span class="t " style="top:536px;font-size:11.3px;color:#787878;letter-spacing:0.018px;right:1009.38px;">Выбранные объекты</span>
<span class="t lnk" style="top:552px;font-size:11.3px;color:#5e5e5e;letter-spacing:-0.013px;right:1009.41px;">Компоненты и тела</span>
<span class="t " style="top:563px;font-size:11.5px;color:#222;left:132.3px;">Тело 2</span>
<span class="t " style="top:686px;font-size:12px;color:#2a2a2a;letter-spacing:-0.129px;left:123.6px;">Параметры создания</span>
<span class="t " style="top:715px;font-size:11.6px;color:#222;letter-spacing:-0.022px;left:150.5px;">Создать с соответствием</span>
<span class="t " style="top:762px;font-size:12px;color:#2a2a2a;left:124.0px;">Свойства</span>
<span class="t " style="top:791px;font-size:11.3px;color:#5e5e5e;letter-spacing:0.142px;right:1009.26px;">Наименование:</span>
<span class="t " style="top:791px;font-size:11.5px;color:#222;left:129.0px;">Элемент вращения:3</span>
<span class="t " style="top:826px;font-size:12px;color:#2a2a2a;left:124.0px;">Отображение</span>
<span class="t " style="top:852px;font-size:11.3px;color:#454545;right:1009.40px;">Способ отображения:</span>
</body></html>
